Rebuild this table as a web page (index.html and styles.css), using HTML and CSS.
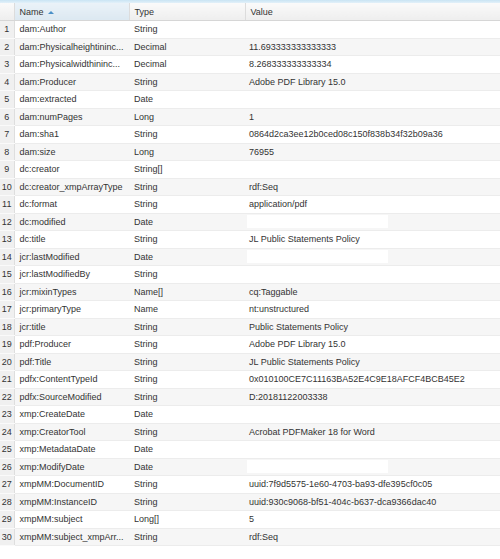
FILE: index.html
```html
<!DOCTYPE html>
<html>
<head>
<meta charset="utf-8">
<link rel="stylesheet" href="styles.css">
</head>
<body>
<div class="topbar"></div>
<table class="grid">
<colgroup><col class="c-num"><col class="c-name"><col class="c-type"><col class="c-val"></colgroup>
<thead>
<tr><th class="num"></th><th class="sorted">Name <span class="arrow"></span></th><th>Type</th><th class="last">Value</th></tr>
</thead>
<tbody>
<tr><td class="num">1</td><td>dam:Author</td><td>String</td><td><span class="red"></span></td></tr>
<tr><td class="num">2</td><td>dam:Physicalheightininc...</td><td>Decimal</td><td>11.693333333333333</td></tr>
<tr><td class="num">3</td><td>dam:Physicalwidthininc...</td><td>Decimal</td><td>8.268333333333334</td></tr>
<tr><td class="num">4</td><td>dam:Producer</td><td>String</td><td>Adobe PDF Library 15.0</td></tr>
<tr><td class="num">5</td><td>dam:extracted</td><td>Date</td><td><span class="red"></span></td></tr>
<tr><td class="num">6</td><td>dam:numPages</td><td>Long</td><td>1</td></tr>
<tr><td class="num">7</td><td>dam:sha1</td><td>String</td><td>0864d2ca3ee12b0ced08c150f838b34f32b09a36</td></tr>
<tr><td class="num">8</td><td>dam:size</td><td>Long</td><td>76955</td></tr>
<tr><td class="num">9</td><td>dc:creator</td><td>String[]</td><td><span class="red"></span></td></tr>
<tr><td class="num">10</td><td>dc:creator_xmpArrayType</td><td>String</td><td>rdf:Seq</td></tr>
<tr><td class="num">11</td><td>dc:format</td><td>String</td><td>application/pdf</td></tr>
<tr><td class="num">12</td><td>dc:modified</td><td>Date</td><td><span class="red"></span></td></tr>
<tr><td class="num">13</td><td>dc:title</td><td>String</td><td>JL Public Statements Policy</td></tr>
<tr><td class="num">14</td><td>jcr:lastModified</td><td>Date</td><td><span class="red"></span></td></tr>
<tr><td class="num">15</td><td>jcr:lastModifiedBy</td><td>String</td><td><span class="red"></span></td></tr>
<tr><td class="num">16</td><td>jcr:mixinTypes</td><td>Name[]</td><td>cq:Taggable</td></tr>
<tr><td class="num">17</td><td>jcr:primaryType</td><td>Name</td><td>nt:unstructured</td></tr>
<tr><td class="num">18</td><td>jcr:title</td><td>String</td><td>Public Statements Policy</td></tr>
<tr><td class="num">19</td><td>pdf:Producer</td><td>String</td><td>Adobe PDF Library 15.0</td></tr>
<tr><td class="num">20</td><td>pdf:Title</td><td>String</td><td>JL Public Statements Policy</td></tr>
<tr><td class="num">21</td><td>pdfx:ContentTypeId</td><td>String</td><td>0x010100CE7C11163BA52E4C9E18AFCF4BCB45E2</td></tr>
<tr><td class="num">22</td><td>pdfx:SourceModified</td><td>String</td><td>D:20181122003338</td></tr>
<tr><td class="num">23</td><td>xmp:CreateDate</td><td>Date</td><td><span class="red"></span></td></tr>
<tr><td class="num">24</td><td>xmp:CreatorTool</td><td>String</td><td>Acrobat PDFMaker 18 for Word</td></tr>
<tr><td class="num">25</td><td>xmp:MetadataDate</td><td>Date</td><td><span class="red"></span></td></tr>
<tr><td class="num">26</td><td>xmp:ModifyDate</td><td>Date</td><td><span class="red"></span></td></tr>
<tr><td class="num">27</td><td>xmpMM:DocumentID</td><td>String</td><td>uuid:7f9d5575-1e60-4703-ba93-dfe395cf0c05</td></tr>
<tr><td class="num">28</td><td>xmpMM:InstanceID</td><td>String</td><td>uuid:930c9068-bf51-404c-b637-dca9366dac40</td></tr>
<tr><td class="num">29</td><td>xmpMM:subject</td><td>Long[]</td><td>5</td></tr>
<tr><td class="num">30</td><td>xmpMM:subject_xmpArr...</td><td>String</td><td>rdf:Seq</td></tr>
</tbody>
</table>
</body>
</html>
```
FILE: styles.css
```css
html, body {
  margin: 0;
  padding: 0;
  background: #fff;
}
body {
  font-family: "Liberation Sans", Arial, sans-serif;
  font-size: 9px;
  color: #333;
}
.topbar {
  height: 3px;
  background: linear-gradient(#c9e4f4, #e3f1f9);
}
.grid {
  width: 500px;
  border-collapse: collapse;
  table-layout: fixed;
}
.c-num { width: 14px; }
.c-name { width: 115px; }
.c-type { width: 116px; }
.c-val { width: 255px; }
.grid th {
  height: 17px;
  padding: 0 0 0 5px;
  text-align: left;
  font-weight: normal;
  background: linear-gradient(#fafafa, #eeeeee);
  border-right: 1px solid #dcdcdc;
  border-bottom: 1px solid #d6d6d6;
  white-space: nowrap;
}
.grid th.num { padding: 0; }
.grid th.last { border-right: none; }
.grid th.sorted {
  background: linear-gradient(#eaf2f8, #dce8f1);
}
.arrow {
  display: inline-block;
  width: 0;
  height: 0;
  margin-left: 2px;
  vertical-align: 1px;
  border-left: 3px solid transparent;
  border-right: 3px solid transparent;
  border-bottom: 3px solid #4a90c8;
}
.grid td {
  height: 17.5px;
  padding: 0 0 0 5px;
  border-bottom: 1px solid #ececec;
  white-space: nowrap;
  overflow: hidden;
  box-sizing: border-box;
}
.grid td:nth-child(4) { padding-left: 4px; }
.grid tbody tr:nth-child(even) td { background: #f6f6f6; }
.grid td.num,
.grid tbody tr:nth-child(even) td.num {
  padding: 0;
  text-align: center;
  background: #f0f0f0;
  border-right: 1px solid #dedede;
  border-bottom: 1px solid #fafafa;
}
.red {
  display: inline-block;
  width: 141px;
  height: 13px;
  margin-left: -2px;
  vertical-align: middle;
  background: #fff;
}
```
